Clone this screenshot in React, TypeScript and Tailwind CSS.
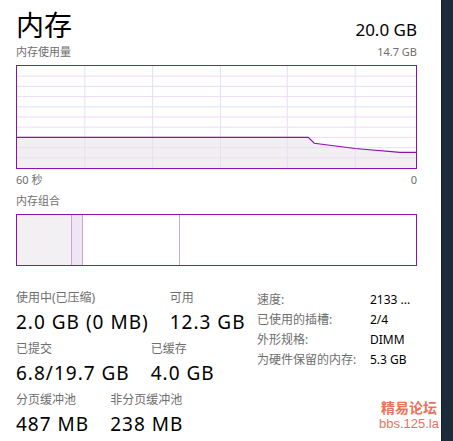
import React from "react";

const FONT = { fontFamily: '"Noto Sans", "Noto Sans CJK SC", sans-serif' };

function UsageGraph() {
  const W = 400;
  const H = 103;
  const rows = Array.from({ length: 9 }, (_, i) => ((i + 1) * H) / 10);
  const cols = [68, 136, 204, 271, 339];
  const pts: [number, number][] = [
    [0, 72.1],
    [292, 72.1],
    [298, 78],
    [339, 83.3],
    [384, 87.3],
    [400, 87.3],
  ];
  const line = pts.map((p) => p.join(",")).join(" ");
  const area = `0,${H} ${line} ${W},${H}`;
  return (
    <div className="mt-[6px] h-[104px] w-[401px] border border-[#8b12ae] bg-white">
      <svg width={399} height={102} viewBox={`0 0 ${W} ${H}`} preserveAspectRatio="none" className="block">
        <polygon points={area} fill="#f2eff3" />
        {rows.map((y) => (
          <line key={y} x1={0} x2={W} y1={y} y2={y} stroke="#ecdcf2" strokeWidth={1} />
        ))}
        {cols.map((x) => (
          <line key={x} x1={x} x2={x} y1={0} y2={H} stroke="#ecdcf2" strokeWidth={1} />
        ))}
        <polyline points={line} fill="none" stroke="#8b12ae" strokeWidth={1.2} />
      </svg>
    </div>
  );
}

function CompBar() {
  return (
    <div className="mt-[6px] flex h-[52px] w-[401px] border border-[#8b12ae] bg-white">
      <div className="h-full w-[54px] bg-[#f3f0f3]" />
      <div className="h-full w-px bg-[#c9a8d4]" />
      <div className="h-full w-[10px] bg-[#efe5f3]" />
      <div className="h-full w-px bg-[#c9a8d4]" />
      <div className="h-full w-[96px]" />
      <div className="h-full w-px bg-[#c9a8d4]" />
      <div className="h-full flex-1" />
    </div>
  );
}

function Stat({ label, value }: { label: string; value: string }) {
  return (
    <div className="flex flex-col">
      <div className="text-[12px] leading-[16px] text-[#6e6e6e]">{label}</div>
      <div className="mt-[4px] text-[19px] leading-[24px] tracking-[1px] text-black">{value}</div>
    </div>
  );
}

export default function App() {
  return (
    <div className="flex h-[441px] w-[453px] overflow-hidden" style={FONT}>
      <div className="relative flex w-[441px] flex-col bg-white pl-4 pr-[24px] pt-[6px]">
        <div className="flex items-end justify-between">
          <div className="text-[28px] leading-[38px] text-black">内存</div>
          <div className="mb-[3px] text-[17px] leading-[22px] text-black">20.0 GB</div>
        </div>
        <div className="mt-[1px] flex justify-between text-[11px] leading-[14px] text-[#6e6e6e]">
          <span>内存使用量</span>
          <span>14.7 GB</span>
        </div>
        <UsageGraph />
        <div className="mt-[4px] flex justify-between text-[11px] leading-[14px] text-[#6e6e6e]">
          <span>60 秒</span>
          <span>0</span>
        </div>
        <div className="mt-[7px] text-[11px] leading-[14px] text-[#6e6e6e]">内存组合</div>
        <CompBar />
        <div className="mt-[24px] flex">
          <div className="flex w-[241px] flex-col gap-[7px]">
            <div className="flex gap-[21px]">
              <Stat label="使用中(已压缩)" value="2.0 GB (0 MB)" />
              <Stat label="可用" value="12.3 GB" />
            </div>
            <div className="flex gap-[21px]">
              <Stat label="已提交" value="6.8/19.7 GB" />
              <Stat label="已缓存" value="4.0 GB" />
            </div>
            <div className="flex gap-[21px]">
              <Stat label="分页缓冲池" value="487 MB" />
              <Stat label="非分页缓冲池" value="238 MB" />
            </div>
          </div>
          <div className="flex flex-col text-[12px] leading-[20px]">
            {[
              ["速度:", "2133 ..."],
              ["已使用的插槽:", "2/4"],
              ["外形规格:", "DIMM"],
              ["为硬件保留的内存:", "5.3 GB"],
            ].map(([k, v]) => (
              <div key={k} className="flex">
                <span className="w-[113px] text-[#6e6e6e]">{k}</span>
                <span className="text-black">{v}</span>
              </div>
            ))}
          </div>
        </div>
        <div className="absolute bottom-[9px] right-[2px] flex flex-col items-center text-[#e8735c]">
          <span className="text-[14px] font-bold leading-[16px]">精易论坛</span>
          <span className="text-[13px] leading-[16px]" style={{ fontFamily: '"Liberation Sans", sans-serif' }}>bbs.125.la</span>
        </div>
      </div>
      <div className="h-full w-[12px] border-l border-[#13202c] bg-[#1c2b3a]" />
    </div>
  );
}
